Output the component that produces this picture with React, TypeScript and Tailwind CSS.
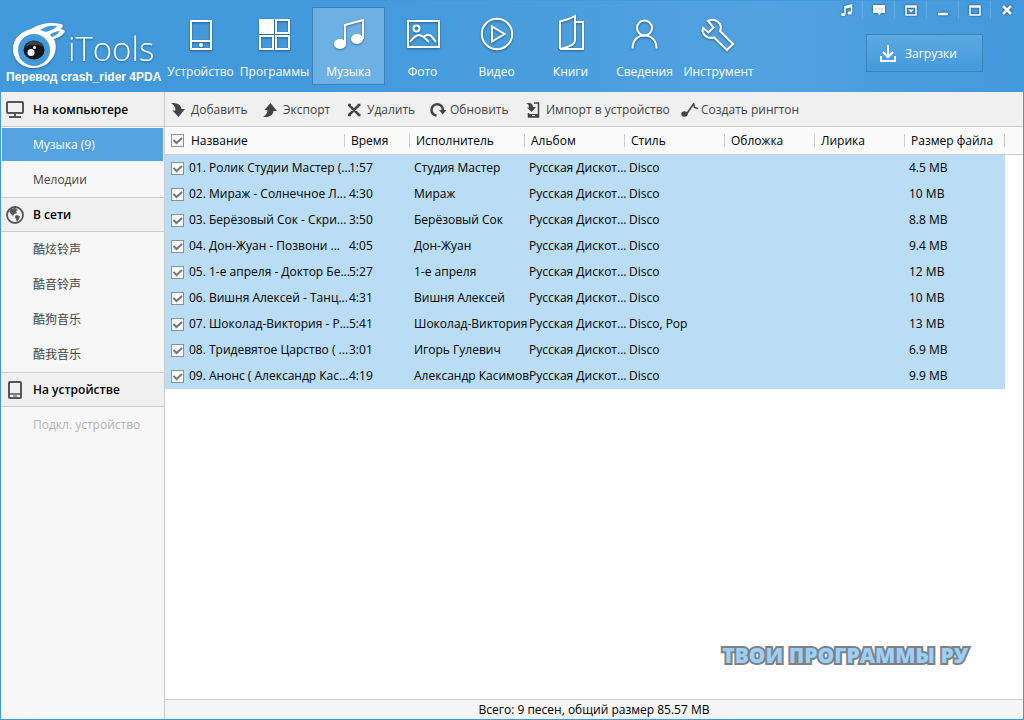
import { useState, type ReactNode } from "react";

interface Track {
  title: string;
  time: string;
  artist: string;
  album: string;
  genre: string;
  size: string;
}

const TRACKS: Track[] = [
  { title: "01. Ролик Студии Мастер (...", time: "1:57", artist: "Студия Мастер", album: "Русская Дискот...", genre: "Disco", size: "4.5 MB" },
  { title: "02. Мираж - Солнечное Л...", time: "4:30", artist: "Мираж", album: "Русская Дискот...", genre: "Disco", size: "10 MB" },
  { title: "03. Берёзовый Сок - Скри...", time: "3:50", artist: "Берёзовый Сок", album: "Русская Дискот...", genre: "Disco", size: "8.8 MB" },
  { title: "04. Дон-Жуан - Позвони ...", time: "4:05", artist: "Дон-Жуан", album: "Русская Дискот...", genre: "Disco", size: "9.4 MB" },
  { title: "05. 1-е апреля - Доктор Бе...", time: "5:27", artist: "1-е апреля", album: "Русская Дискот...", genre: "Disco", size: "12 MB" },
  { title: "06. Вишня Алексей - Танц...", time: "4:31", artist: "Вишня Алексей", album: "Русская Дискот...", genre: "Disco", size: "10 MB" },
  { title: "07. Шоколад-Виктория - Р...", time: "5:41", artist: "Шоколад-Виктория", album: "Русская Дискот...", genre: "Disco, Pop", size: "13 MB" },
  { title: "08. Тридевятое Царство ( ...", time: "3:01", artist: "Игорь Гулевич", album: "Русская Дискот...", genre: "Disco", size: "6.9 MB" },
  { title: "09. Анонс ( Александр Кас...", time: "4:19", artist: "Александр Касимов", album: "Русская Дискот...", genre: "Disco", size: "9.9 MB" },
];

const COLUMNS = [
  { label: "Время", width: "w-[65px]" },
  { label: "Исполнитель", width: "w-[115px]" },
  { label: "Альбом", width: "w-[100px]" },
  { label: "Стиль", width: "w-[100px]" },
  { label: "Обложка", width: "w-[90px]" },
  { label: "Лирика", width: "w-[90px]" },
  { label: "Размер файла", width: "w-[100px]" },
];

const NAV: { label: string; icon: ReactNode }[] = [
  {
    label: "Устройство",
    icon: (
      <>
        <rect x="11" y="7" width="20" height="28" />
        <path d="M11 27h20" />
        <circle cx="21" cy="31" r="2" fill="currentColor" stroke="none" />
      </>
    ),
  },
  {
    label: "Программы",
    icon: (
      <>
        <rect x="5" y="5" width="15" height="15" fill="currentColor" stroke="none" />
        <rect x="22" y="6" width="13" height="13" />
        <rect x="6" y="22" width="13" height="13" />
        <rect x="22" y="22" width="13" height="13" />
      </>
    ),
  },
  {
    label: "Музыка",
    icon: (
      <>
        <path d="M17 30V11L35 6v19" />
        <ellipse cx="12" cy="30" rx="6" ry="5" fill="currentColor" stroke="none" />
        <ellipse cx="29" cy="25" rx="6" ry="5" fill="currentColor" stroke="none" />
      </>
    ),
  },
  {
    label: "Фото",
    icon: (
      <>
        <rect x="6" y="7" width="31" height="26" />
        <circle cx="14.5" cy="14.5" r="3" />
        <path d="M8 28c3-4 6-7 9-7s6 3 10 7M21 23.500c2-2 4-3 6-2.500 3 0 4 4 7 7" />
      </>
    ),
  },
  {
    label: "Видео",
    icon: (
      <>
        <circle cx="21" cy="20" r="15.200" />
        <path d="M16 12.500v15L28.500 20z" />
      </>
    ),
  },
  {
    label: "Книги",
    icon: <path d="M10 35V7.500C15 6.500 20 5 25 2v24c0 5-7 7-15 9h23V8h-8" />,
  },
  {
    label: "Сведения",
    icon: (
      <>
        <circle cx="20.500" cy="14" r="7.500" />
        <path d="M8.500 34.500c0-8 5-13 12-13s12 5 12 13" />
      </>
    ),
  },
  {
    label: "Инструмент",
    icon: <path d="M10 7c3-1.500 7-1.500 10 1s3.500 6 2 9l13 13-6 6-13-12.500c-3 1-6.500.5-9-2s-3-5-2-7.500l5.500 4.500 5-5z" />,
  },
];

const TOOLS: { label: string; width: string; icon: ReactNode }[] = [
  {
    label: "Добавить",
    width: "w-[92px]",
    icon: <path d="M0 1c6-.5 10 1.500 10.500 6H14L7.500 15 1.500 8.500h3C4.500 5 3 3 0 1z" fill="currentColor" />,
  },
  {
    label: "Экспорт",
    width: "w-[84px]",
    icon: <path d="M0 15c6 .5 10-1.500 10.500-6H14L7.500 1 1.500 8h3C4.500 11 3 13 0 15z" fill="currentColor" />,
  },
  {
    label: "Удалить",
    width: "w-[83px]",
    icon: <path d="M2 3l10 10M12 3L2 13M1 3h3M10.500 3h3M1 13h3M10.500 13h3" stroke="currentColor" strokeWidth="2.500" />,
  },
  {
    label: "Обновить",
    width: "w-[96px]",
    icon: (
      <>
        <path d="M6.500 13.500C3.500 13 1.500 11 1.500 8a5.700 5.700 0 0 1 11.400 0v1" stroke="currentColor" strokeWidth="2.500" />
        <path d="M9 8h7.500l-3.800 4.500z" fill="currentColor" />
      </>
    ),
  },
  {
    label: "Импорт в устройство",
    width: "w-[155px]",
    icon: (
      <>
        <path d="M8 1h4.500v14H2.500v-4" stroke="currentColor" strokeWidth="1.500" />
        <path d="M2 12h11v3H2z" fill="currentColor" />
        <path d="M6 13.500h3" stroke="#f0f0f0" />
        <path d="M0 1c5-.5 7 1 7 4h3L5.500 10 1 5.500h2C3 3 2 2 0 1z" fill="currentColor" />
      </>
    ),
  },
  {
    label: "Создать рингтон",
    width: "w-[120px]",
    icon: (
      <>
        <ellipse cx="3.500" cy="12" rx="3.200" ry="2.700" fill="currentColor" />
        <path d="M5.500 12l7-10M12.500 1l1 4.500 3.500 1" stroke="currentColor" strokeWidth="1.500" />
      </>
    ),
  },
];

const SIDEBAR: { title: string; icon: ReactNode; items: string[] }[] = [
  {
    title: "На компьютере",
    icon: (
      <>
        <rect x="1" y="1" width="16" height="11" rx="1" strokeWidth="2" />
        <path d="M9 12v4M3 16h12" strokeWidth="2" />
      </>
    ),
    items: ["Музыка (9)", "Мелодии"],
  },
  {
    title: "В сети",
    icon: (
      <>
        <circle cx="9" cy="9" r="8" strokeWidth="1.800" />
        <path d="M5 3l4-1 3 2-2 1 1 2-3 1-1 2-2-2-2-3zM10 9l4 1-1 3-2 3-1-3-1-2z" fill="currentColor" stroke="none" />
      </>
    ),
    items: ["酷炫铃声", "酷音铃声", "酷狗音乐", "酷我音乐"],
  },
  {
    title: "На устройстве",
    icon: (
      <>
        <rect x="3" y="1" width="12" height="16" rx="1" strokeWidth="2" />
        <path d="M3 13h12" strokeWidth="1.500" />
        <path d="M7 15h4" strokeWidth="1" />
      </>
    ),
    items: ["Подкл. устройство"],
  },
];

const WINDOW_BUTTONS: { label: string; icon: ReactNode }[] = [
  {
    label: "Музыка",
    icon: (
      <>
        <path d="M6 12V4.500L12.500 3v7.500M6 6l6.500-1.500" />
        <ellipse cx="4.200" cy="12.500" rx="2.200" ry="1.800" fill="currentColor" stroke="none" />
        <ellipse cx="10.700" cy="11" rx="2.200" ry="1.800" fill="currentColor" stroke="none" />
      </>
    ),
  },
  {
    label: "Сообщения",
    icon: (
      <>
        <path d="M2 3h12v8h-4l-2 2.500L7 11H2z" fill="currentColor" stroke="none" />
        <path d="M4.500 7h7" stroke="#b9bcc0" strokeDasharray="1 2" strokeWidth="2" />
      </>
    ),
  },
  {
    label: "Меню",
    icon: (
      <>
        <path d="M3 4h10v9H3zM3 5h10" />
        <path d="M5 7.500h6L8 10.500z" fill="currentColor" stroke="none" />
      </>
    ),
  },
  { label: "Свернуть", icon: <path d="M3 12h10" strokeWidth="2.500" /> },
  { label: "Развернуть", icon: <path d="M3 4h10v9H3zM3 5h10" /> },
  { label: "Закрыть", icon: <path d="M4 4l8 8M12 4l-8 8" strokeWidth="2.500" /> },
];

function Check({ label, checked, onChange }: { label: string; checked: boolean; onChange: () => void }) {
  return (
    <label className="relative block size-[13px] shrink-0">
      <input
        type="checkbox"
        aria-label={label}
        checked={checked}
        onChange={onChange}
        className="peer block size-[13px] appearance-none border border-[#8e8f8f] bg-[#f8f8f8]"
      />
      <svg viewBox="0 0 13 13" fill="none" className="pointer-events-none absolute inset-0 hidden size-[13px] text-[#777] peer-checked:block">
        <path d="M2.500 6l3 3L11 4" stroke="currentColor" strokeWidth="2" />
      </svg>
    </label>
  );
}

function Logo() {
  return (
    <div className="w-[163px] shrink-0 pt-[19px] text-white">
      <div className="flex h-[49px] items-end gap-[3px] pl-3">
        <svg viewBox="0 0 52 48" fill="none" className="h-12 w-[52px] shrink-0 drop-shadow-[0_1px_1px_rgba(0,0,0,0.3)]">
          <path
            d="M0 28C0 17 9 10 18 8 27 2 38 1 48 3c3 1 2 4-1 5 4 0 6 2 4 4-2 3-6 5-10 6 6 13-4 29-20 29C9 47 0 39 0 28z"
            fill="currentColor"
          />
          <path d="M27 9c5-4 11-5 17-4-2 3-6 4-11 6zM37 14c3-3 7-4 10-4-2 3-5 5-8 6z" fill="#429adc" />
          <circle cx="21" cy="29" r="16" fill="#429adc" />
          <ellipse cx="21" cy="29" rx="10.500" ry="9.500" fill="#15171c" />
          <path d="M12 26c2-4 5-6 9-6s8 2 9 6c-5-3-12-3-18 0z" fill="#3d434d" />
          <circle cx="18" cy="31.500" r="3.500" fill="currentColor" />
          <circle cx="21.500" cy="26.500" r="1.500" fill="currentColor" />
        </svg>
        <span className="font-['Open_Sans'] text-[33px] leading-10 font-light drop-shadow-[0_1px_1px_rgba(0,0,0,0.3)]">iTools</span>
      </div>
      <div className="pl-[5px] font-['Liberation_Sans'] text-[12px] leading-4 font-bold whitespace-nowrap">Перевод crash_rider 4PDA</div>
    </div>
  );
}

function Header() {
  return (
    <header className="flex h-[91px] shrink-0 bg-linear-to-r from-[#4299dc] from-30% via-[#51a2df] via-75% to-[#4299dc] text-white">
      <Logo />
      <nav className="flex gap-px pt-1.5">
        {NAV.map((item) => (
          <button
            key={item.label}
            className={`flex h-[78px] w-[73px] flex-col items-center border pt-1.5 ${
              item.label === "Музыка" ? "border-[#3b82b8] bg-[#6db0e4]" : "border-transparent"
            }`}
          >
            <svg
              viewBox="0 0 41 40"
              fill="none"
              stroke="currentColor"
              strokeWidth="2"
              className="h-10 w-[41px] shrink-0 drop-shadow-[0_1px_1px_rgba(0,0,0,0.4)]"
            >
              {item.icon}
            </svg>
            <span className="mt-2 leading-5 whitespace-nowrap">{item.label}</span>
          </button>
        ))}
      </nav>
      <div className="ml-auto flex flex-col items-end">
        <div className="flex h-[18px] divide-x divide-[#64aae0]">
          {WINDOW_BUTTONS.map((b) => (
            <button key={b.label} aria-label={b.label} className="flex w-8 items-center justify-center">
              <svg viewBox="0 0 16 16" fill="none" stroke="currentColor" strokeWidth="1.500" className="size-4 drop-shadow-[0_0_1px_rgba(0,50,90,0.8)]">
                {b.icon}
              </svg>
            </button>
          ))}
        </div>
        <button className="mt-[15px] mr-10 flex h-[38px] w-[117px] items-center gap-2 border border-[#3b82b8] bg-linear-to-b from-[#5ca9e2] to-[#439adc] pt-px pl-3">
          <svg viewBox="0 0 18 18" fill="none" stroke="currentColor" strokeWidth="2" className="size-[18px]">
            <path d="M9 0v12M4 7l5 5 5-5M2 11v5h14v-5" />
          </svg>
          <span>Загрузки</span>
        </button>
      </div>
    </header>
  );
}

function Sidebar() {
  const [active, setActive] = useState("Музыка (9)");

  return (
    <aside className="w-[164px] shrink-0 border-r border-[#ccc] bg-[#f7f7f7] text-[#444]">
      {SIDEBAR.map((section, i) => (
        <section key={section.title}>
          <h2
            className={`flex h-[35px] items-center gap-2 border-y border-b-[#ccc] bg-[#f0f0f0] pl-[5px] font-semibold text-black ${
              i > 0 ? "border-t-[#ccc]" : "border-t-[#f0f0f0]"
            }`}
          >
            <svg viewBox="0 0 18 18" fill="none" stroke="currentColor" className="size-[18px] text-[#555]">
              {section.icon}
            </svg>
            <span className="pl-px">{section.title}</span>
          </h2>
          <ul>
            {section.items.map((item) => (
              <li key={item} className="h-[35px] p-px">
                <button
                  disabled={i === 2}
                  onClick={() => setActive(item)}
                  className={`block h-full w-full pl-[31px] text-left disabled:text-[#b5b5b5] ${
                    item === active ? "bg-[#55a3e0] text-white" : ""
                  }`}
                >
                  {item}
                </button>
              </li>
            ))}
          </ul>
        </section>
      ))}
    </aside>
  );
}

function TrackTable() {
  const [unchecked, setUnchecked] = useState<string[]>([]);

  function toggle(title: string) {
    setUnchecked((prev) => (prev.includes(title) ? prev.filter((t) => t !== title) : [...prev, title]));
  }

  return (
    <table className="w-full table-fixed border-separate border-spacing-0 text-left whitespace-nowrap">
      <thead>
        <tr className="h-7 bg-[#fafafa] *:border-b *:border-[#ccc] *:p-0 *:font-normal">
          <th className="w-[180px]">
            <div className="flex h-[13px] items-center gap-[7px] border-r border-[#ccc] pl-1.5">
              <Check
                label="Выбрать все"
                checked={unchecked.length === 0}
                onChange={() => setUnchecked(unchecked.length ? [] : TRACKS.map((t) => t.title))}
              />
              Название
            </div>
          </th>
          {COLUMNS.map((c) => (
            <th key={c.label} className={c.width}>
              <div className="flex h-[13px] items-center border-r border-[#ccc] pl-1.5">{c.label}</div>
            </th>
          ))}
          <th />
        </tr>
      </thead>
      <tbody>
        {TRACKS.map((t) => (
          <tr key={t.title} className="h-[26px] *:bg-[#b9ddf5] *:p-0 *:pl-1">
            <td>
              <div className="flex h-[15px] items-center gap-[5px] pl-0.5">
                <Check label={t.title} checked={!unchecked.includes(t.title)} onChange={() => toggle(t.title)} />
                {t.title}
              </div>
            </td>
            <td>{t.time}</td>
            <td>{t.artist}</td>
            <td>{t.album}</td>
            <td>{t.genre}</td>
            <td />
            <td />
            <td>{t.size}</td>
            <td className="bg-white!" />
          </tr>
        ))}
      </tbody>
    </table>
  );
}

export default function App() {
  return (
    <div className="flex h-screen flex-col border border-[#429adc] bg-white font-['Open_Sans','Noto_Sans_CJK_SC',sans-serif] text-[12px] leading-4 text-black">
      <Header />
      <div className="flex min-h-0 flex-1">
        <Sidebar />
        <main className="flex min-w-0 flex-1 flex-col">
          <div className="flex h-[35px] shrink-0 border-b border-[#ccc] bg-[#f0f0f0] pt-px pl-1.5 text-[#444]">
            {TOOLS.map((tool) => (
              <button key={tool.label} className={`flex items-center gap-1 whitespace-nowrap ${tool.width}`}>
                <svg viewBox="0 0 16 16" fill="none" className="size-4 shrink-0 overflow-visible">
                  {tool.icon}
                </svg>
                {tool.label}
              </button>
            ))}
          </div>
          <div className="relative min-h-0 flex-1">
            <TrackTable />
            <div className="absolute right-[55px] bottom-7 text-[21px] leading-8 font-extrabold text-[#9bd0fa] [-webkit-text-stroke:4px_#7f8285] [paint-order:stroke]">
              ТВОИ ПРОГРАММЫ РУ
            </div>
          </div>
          <footer className="h-5 shrink-0 border-t border-[#ccc] bg-[#f5f5f5] text-center leading-5">
            Всего: 9 песен, общий размер 85.57 MB
          </footer>
        </main>
      </div>
    </div>
  );
}
